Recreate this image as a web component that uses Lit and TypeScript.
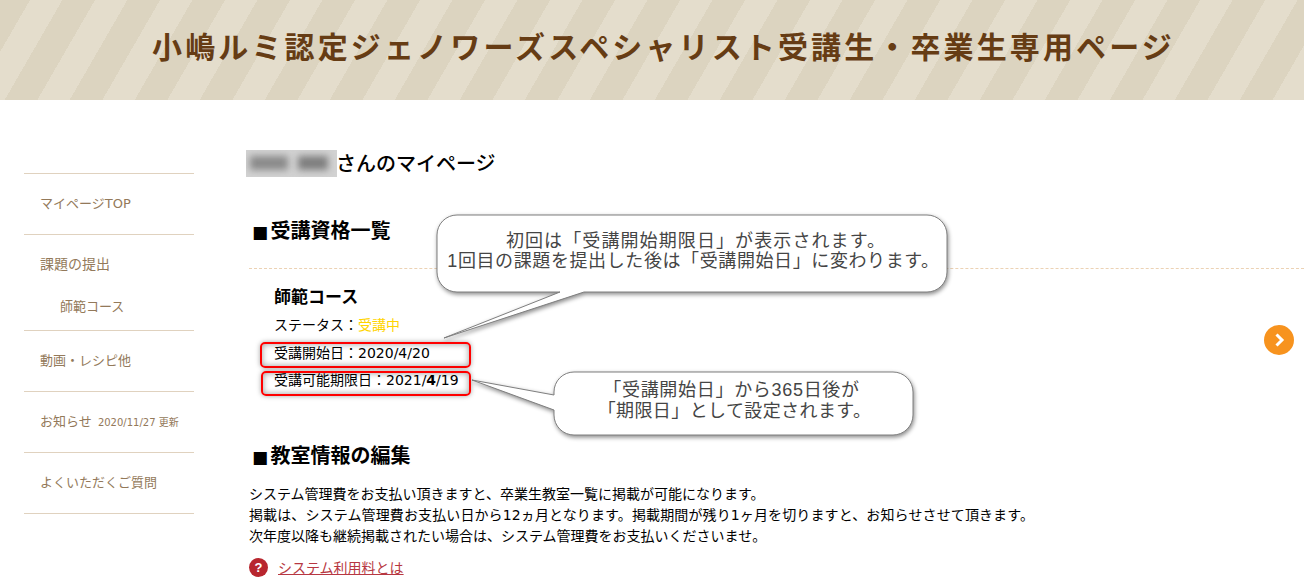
import { LitElement, html, css, svg } from "lit";
import { customElement } from "lit/decorators.js";

@customElement("app-root")
export class AppRoot extends LitElement {
  static styles = css`
    :host {
      display: block;
      position: relative;
      height: 578px;
      overflow: hidden;
      background: #fff;
      font-family: "DejaVu Sans", "Noto Sans CJK JP", sans-serif;
      color: #000;
    }
    .header {
      height: 100px;
      box-sizing: border-box;
      padding: 0 0 10px 23px;
      display: flex;
      align-items: center;
      justify-content: center;
      background: repeating-linear-gradient(
        120deg,
        #dcd4c0 0,
        #dcd4c0 26px,
        #e4ddcc 26px,
        #e4ddcc 54px,
        #dcd4c0 54px,
        #dcd4c0 56.3px
      );
    }
    .header h1 {
      margin: 0;
      font-family: "Noto Sans CJK JP", sans-serif;
      font-size: 30px;
      line-height: 40px;
      font-weight: 700;
      letter-spacing: 3.13px;
      color: #663c14;
      white-space: nowrap;
    }
    .layout {
      display: flex;
      align-items: flex-start;
    }
    .side {
      width: 170px;
      margin: 73px 0 0 24px;
      flex: none;
      border-bottom: 1px solid #e0d2bf;
      font-size: 13px;
      color: #93795a;
    }
    .side-item {
      border-top: 1px solid #e0d2bf;
      padding: 20px 16px 0;
      height: 40px;
      line-height: 20px;
      white-space: nowrap;
    }
    .side-item.tall {
      padding-top: 19px;
      height: 76px;
    }
    .wide {
      font-size: 14px;
    }
    .sub {
      margin: 22px 0 0 20px;
    }
    .side-item small {
      font-size: 10px;
      margin-left: 2px;
    }
    .main {
      flex: 1;
      margin: 47px 0 0 55px;
      min-width: 0;
    }
    .mypage {
      display: flex;
      align-items: center;
      height: 32px;
      font-size: 20px;
      font-family: "Noto Sans CJK JP", sans-serif;
      font-weight: 500;
      margin-left: -3px;
    }
    .mypage span {
      margin-left: -1px;
      padding-bottom: 2px;
    }
    .blur {
      width: 91px;
      height: 27px;
      background: #d2d2d2;
      display: flex;
      align-items: center;
      gap: 10px;
      padding-left: 4px;
      box-sizing: border-box;
      overflow: hidden;
    }
    .blur i {
      display: block;
      height: 14px;
      background: #8a8a8a;
      filter: blur(3.5px);
    }
    .blur i.a { width: 38px; }
    .blur i.b { width: 30px; background: #7e7e7e; }
    h2 {
      margin: 0;
      font-size: 20px;
      line-height: 30px;
      font-weight: 700;
      padding-left: 3px;
    }
    h2 .sq {
      font-size: 17px;
      margin-right: 2.4px;
    }
    h2.first {
      margin-top: 37px;
    }
    .dash {
      border-top: 1px dashed #ecd2b4;
      margin-top: 21px;
    }
    .course {
      padding: 16px 0 0 25px;
      font-size: 14px;
    }
    .course h3 {
      margin: 0;
      font-size: 17px;
      line-height: 24px;
      font-weight: 700;
    }
    .course p {
      margin: 0;
      line-height: 27.5px;
      height: 27.5px;
    }
    .course p:first-of-type {
      margin-top: 3px;
    }
    .yellow { color: #ffd400; }
    .heavy { font-weight: 700; }
    h2.second {
      margin-top: 46px;
    }
    .desc {
      margin: 12px 0 0;
      font-size: 14px;
      line-height: 21px;
      white-space: nowrap;
    }
    .desc .stretch {
      letter-spacing: 0.12px;
    }
    .link {
      display: flex;
      align-items: center;
      gap: 10px;
      margin-top: 11px;
      font-size: 14px;
      line-height: 20px;
    }
    .q {
      width: 19px;
      height: 19px;
      border-radius: 50%;
      background: #b8262e;
      color: #fff;
      font: 700 13px/19px "Liberation Sans", sans-serif;
      text-align: center;
      flex: none;
    }
    .link a {
      color: #b73742;
      text-decoration: underline;
    }
    .shapes {
      position: absolute;
      left: 0;
      top: 0;
      pointer-events: none;
    }
    .shape {
      fill: #fff;
      stroke: #7f7f7f;
      stroke-width: 1;
      filter: drop-shadow(1px 2px 2px rgba(0, 0, 0, 0.45));
    }
    .note {
      position: absolute;
      text-align: center;
      font-family: "Liberation Sans", "Noto Sans CJK JP", sans-serif;
      font-size: 18px;
      line-height: 20px;
      color: #454545;
      white-space: nowrap;
    }
    .note.one {
      left: 437px;
      width: 510px;
      top: 231px;
    }
    .note.one .l1 { letter-spacing: 1.1px; margin-left: 8px; }
    .note.one .l2 { letter-spacing: 0.6px; margin-left: 3px; }
    .note.two {
      left: 554px;
      width: 359px;
      top: 380px;
      line-height: 21px;
    }
    .note.two .l1 { letter-spacing: 0.7px; margin-left: -4px; }
    .note.two .l2 { letter-spacing: 0.4px; margin-left: 2px; }
    .mark {
      position: absolute;
      box-sizing: border-box;
      border: 2px solid #f00;
      border-radius: 5px;
      box-shadow: 0 0 5px rgba(0, 0, 0, 0.35), inset 0 0 6px rgba(0, 0, 0, 0.4);
    }
    .mark.m1 { left: 260px; top: 342px; width: 211px; height: 26px; }
    .mark.m2 { left: 261px; top: 371px; width: 210px; height: 25px; }
    .next {
      position: absolute;
      left: 1264px;
      top: 325px;
      width: 30px;
      height: 30px;
      border-radius: 50%;
      background: #f7931e;
      display: flex;
      align-items: center;
      justify-content: center;
    }
  `;

  private shapes() {
    return svg`
      <path class="shape" d="M457 215 H927 A20 20 0 0 1 947 235 V272 A20 20 0 0 1 927 292 H584 L444 338 L560 292 H457 A20 20 0 0 1 437 272 V235 A20 20 0 0 1 457 215 Z" />
      <path class="shape" d="M574 372 H893 A20 20 0 0 1 913 392 V415 A20 20 0 0 1 893 435 H574 A20 20 0 0 1 554 415 V410 L472 380 L554 395 V392 A20 20 0 0 1 574 372 Z" />
    `;
  }

  render() {
    return html`
      <div class="header"><h1>小嶋ルミ認定ジェノワーズスペシャリスト受講生・卒業生専用ページ</h1></div>
      <div class="layout">
        <nav class="side">
          <div class="side-item">マイページTOP</div>
          <div class="side-item tall"><span class="wide">課題の提出</span><div class="sub">師範コース</div></div>
          <div class="side-item">動画・レシピ他</div>
          <div class="side-item">お知らせ <small>2020/11/27 更新</small></div>
          <div class="side-item">よくいただくご質問</div>
        </nav>
        <main class="main">
          <div class="mypage">
            <div class="blur"><i class="a"></i><i class="b"></i></div>
            <span>さんのマイページ</span>
          </div>
          <h2 class="first"><span class="sq">■</span>受講資格一覧</h2>
          <div class="dash"></div>
          <section class="course">
            <h3>師範コース</h3>
            <p>ステータス：<span class="yellow">受講中</span></p>
            <p>受講開始日：2020/4/20</p>
            <p>受講可能期限日：2021/<span class="heavy">4</span>/19</p>
          </section>
          <h2 class="second"><span class="sq">■</span>教室情報の編集</h2>
          <p class="desc">
            システム管理費をお支払い頂きますと、卒業生教室一覧に掲載が可能になります。<br />
            <span class="stretch">掲載は、システム管理費お支払い日から12ヵ月となります。掲載期間が残り1ヶ月を切りますと、お知らせさせて頂きます。</span><br />
            次年度以降も継続掲載されたい場合は、システム管理費をお支払いくださいませ。
          </p>
          <div class="link"><span class="q">?</span><a href="#">システム利用料とは</a></div>
        </main>
      </div>
      <svg class="shapes" width="1304" height="578">${this.shapes()}</svg>
      <div class="note one"><span class="l1">初回は「受講開始期限日」が表示されます。</span><br /><span class="l2">1回目の課題を提出した後は「受講開始日」に変わります。</span></div>
      <div class="note two"><span class="l1">「受講開始日」から365日後が</span><br /><span class="l2">「期限日」として設定されます。</span></div>
      <div class="mark m1"></div>
      <div class="mark m2"></div>
      <div class="next">
        <svg width="12" height="14" viewBox="0 0 12 14"><path d="M3.5 1.5 L9 7 L3.5 12.5" fill="none" stroke="#fff" stroke-width="3" /></svg>
      </div>
    `;
  }
}
